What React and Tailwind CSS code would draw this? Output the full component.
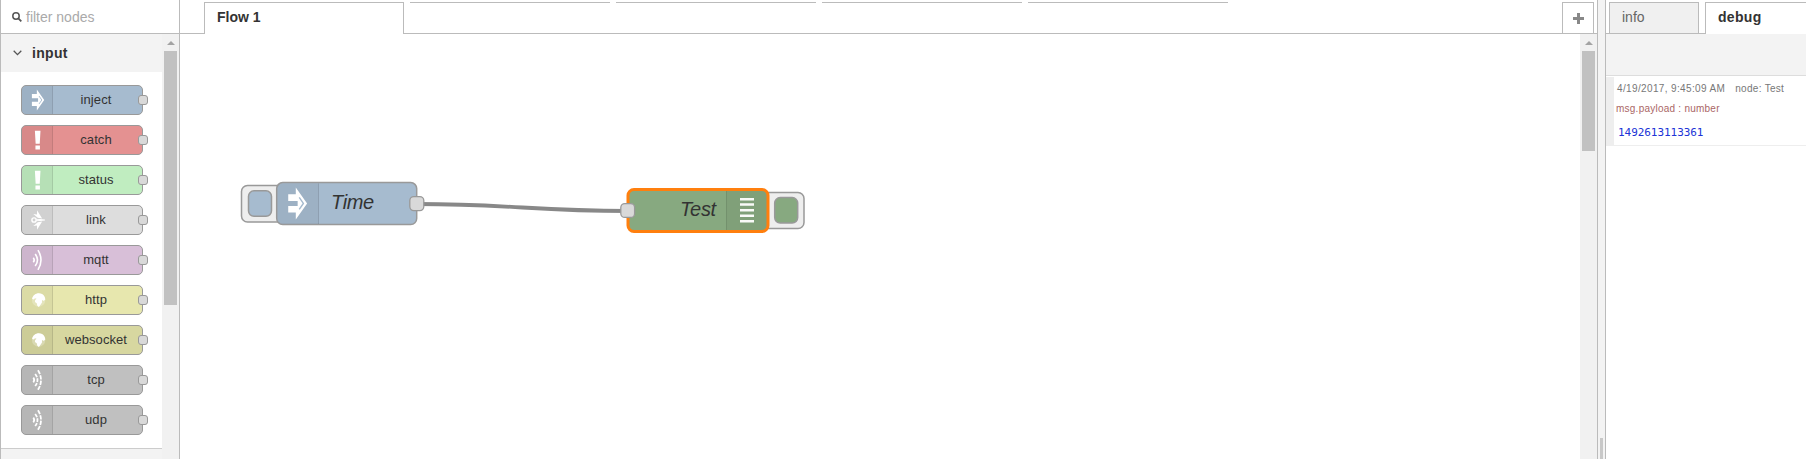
import React from 'react';

const palette = [
  { label: 'inject', bg: 'bg-[#a6bbcf]', icon: 'inject' },
  { label: 'catch', bg: 'bg-[#e49191]', icon: 'alert' },
  { label: 'status', bg: 'bg-[#c0edc0]', icon: 'alert' },
  { label: 'link', bg: 'bg-[#dddddd]', icon: 'link' },
  { label: 'mqtt', bg: 'bg-[#d8bfd8]', icon: 'waves' },
  { label: 'http', bg: 'bg-[#e7e7ae]', icon: 'globe' },
  { label: 'websocket', bg: 'bg-[#d7d7a0]', icon: 'globe' },
  { label: 'tcp', bg: 'bg-[#c0c0c0]', icon: 'bridge' },
  { label: 'udp', bg: 'bg-[#c0c0c0]', icon: 'bridge' },
];

function InjectGlyph() {
  return (
    <>
      <path fill="#fff" d="M4 8.600h5.300V3.800L17.200 15 9.300 26.200v-4.800H4v-4.600h6.600v-3.600H4z" />
      <path stroke="#a6bbcf" strokeWidth="1" d="M11.700 10.800l2.900 4.200-2.900 4.200" fill="none" />
    </>
  );
}

function NodeIcon({ name }) {
  return (
    <svg viewBox="0 0 20 30" className="h-[28px] w-[19px]" fill="none">
      {name === 'inject' && <InjectGlyph />}
      {name === 'alert' && (
        <path fill="#fff" d="M7.200 5h6l-.8 14H8zM7.800 21h4.800v4.200H7.800z" />
      )}
      {name === 'link' && (
        <>
          <path fill="#fff" d="M9.500 4.500l5.500 8.800-4.700-.8L5.500 8.500l4 .6z" />
          <path fill="#fff" d="M9.500 25.500l5.500-8.800-4.700.8-4.800 4 4-.6z" />
          <path fill="#fff" d="M9 14.200l4-.4 5 .6v1.200l-5 .6-4-.4z" />
          <circle cx="6.300" cy="15" r="2.300" stroke="#fff" strokeWidth="1.500" />
        </>
      )}
      {name === 'waves' && (
        <g stroke="#fff" strokeWidth="1.700">
          <path d="M5.500 12.500q2 2.500 0 5" />
          <path d="M7.500 8.500q5 6.500 0 13" />
          <path d="M10.500 4.500q6.500 10.500 0 21" />
        </g>
      )}
      {name === 'globe' && (
        <>
          <circle cx="11.200" cy="15" r="7.200" fill="#fff" fillOpacity=".25" />
          <path fill="#fff" d="M4.200 13.800C5 10 8.300 7.700 11.500 7.800c4 .1 6.600 3 6.900 6.700l-1.800 1.700-1-1.200-.9.700.3 1.600-1.400 2.200-2.100 3-1.700-1.400-.6-2.700-2-1.300.3-2.200 1.500-1.200-1.800-.5-1 1.300z" />
        </>
      )}
      {name === 'bridge' && (
        <g stroke="#fff" strokeWidth="1.900">
          <path d="M5.500 12.500q2 2.500 0 5" />
          <path d="M7.500 8.500q5 6.500 0 13" strokeDasharray="4 1.200" />
          <path d="M10.500 4.500q6.500 10.500 0 21" strokeDasharray="4.600 1.300" />
        </g>
      )}
    </svg>
  );
}

function PaletteNode({ label, bg, icon }) {
  return (
    <div className={`relative flex h-[30px] w-[122px] rounded-[5px] border border-[#999] ${bg}`}>
      <div className="flex w-[31px] shrink-0 items-center justify-center rounded-l-[4px] border-r border-black/10 bg-black/5">
        <NodeIcon name={icon} />
      </div>
      <div className="flex-1 pr-[3px] text-center text-[13px] leading-[27px] tracking-[0.08px] text-[#333]">
        {label}
      </div>
      <span className="absolute top-[9px] -right-[6px] h-[10px] w-[10px] rounded-[3px] border border-[#999] bg-[#d9d9d9]" />
    </div>
  );
}

function ScrollBar({ thumb }) {
  return (
    <div className="flex w-[17px] shrink-0 flex-col items-center bg-[#f1f1f1]">
      <div className="flex h-[17px] shrink-0 items-center justify-center">
        <svg viewBox="0 0 8 4" className="mt-px h-[4px] w-[8px]">
          <path d="M0 4L4 0l4 4z" fill="#a3a3a3" />
        </svg>
      </div>
      <div className={`w-[13px] shrink-0 bg-[#c1c1c1] ${thumb}`} />
    </div>
  );
}

function Palette() {
  return (
    <aside className="flex w-[180px] shrink-0 flex-col border-x border-[#bbb] bg-white">
      <div className="flex h-[34px] shrink-0 items-center border-b border-[#bbb] pl-[11px]">
        <svg viewBox="0 0 10 10" className="h-[10px] w-[10px]" fill="none" stroke="#555">
          <circle cx="4" cy="4" r="3.200" strokeWidth="1.500" />
          <path d="M6.300 6.300L9.300 9.300" strokeWidth="1.800" />
        </svg>
        <span className="ml-[4px] text-[14px] leading-5 text-[#aaa]">filter nodes</span>
      </div>
      <div className="flex min-h-0 flex-1">
        <div className="flex min-w-0 flex-1 flex-col">
          <div className="flex h-[38px] shrink-0 items-center bg-[#f3f3f3] pl-[12px]">
            <svg viewBox="0 0 9 6" className="h-[6px] w-[9px]" fill="none" stroke="#555" strokeWidth="1.300">
              <path d="M.7.800l3.800 3.800L8.300.8" />
            </svg>
            <span className="ml-[10px] text-[14px] font-bold tracking-[0.3px] text-[#333]">input</span>
          </div>
          <div className="flex h-[376px] shrink-0 flex-col gap-[10px] pt-[13px] pl-[20px]">
            {palette.map((n) => (
              <PaletteNode key={n.label} {...n} />
            ))}
          </div>
          <div className="flex-1 border-t border-[#ccc] bg-[#f3f3f3]" />
        </div>
        <ScrollBar thumb="h-[254px]" />
      </div>
    </aside>
  );
}

function FlowCanvas() {
  return (
    <svg className="block h-[425px] w-[1400px]" viewBox="180 34 1400 425" fill="none">
      <path d="M417 204C510 204 535 211 628 211" stroke="#888" strokeWidth="3.800" />

      <g stroke="#999" strokeWidth="1.500">
        <rect x="241.500" y="185.500" width="45" height="36.500" rx="6" fill="#eee" />
        <rect x="248.500" y="190.800" width="23" height="25.500" rx="5.500" fill="#a6bbcf" />
        <rect x="276.700" y="182.600" width="140" height="42" rx="6" fill="#a6bbcf" />
      </g>
      <path d="M283 183.500h35.500v40.500H283q-5.500 0-5.500-5.500v-29.500q0-5.500 5.500-5.500z" fill="#000" fillOpacity=".05" />
      <path d="M318.500 183.500v40.500" stroke="#000" strokeOpacity=".12" />
      <g transform="translate(282.500 182) scale(1.430)">
        <InjectGlyph />
      </g>
      <text x="331" y="209" className="fill-[#333] text-[20px] tracking-[-0.4px] italic">Time</text>
      <rect x="409.800" y="196.600" width="14" height="14" rx="4" fill="#d9d9d9" stroke="#999" strokeWidth="1.300" />

      <g stroke="#999" strokeWidth="1.500">
        <rect x="759" y="192.500" width="45" height="36" rx="6" fill="#eee" />
        <rect x="774.700" y="197.600" width="23" height="25.500" rx="5.500" fill="#87a980" />
      </g>
      <rect x="628" y="189.500" width="140" height="42" rx="6" fill="#87a980" />
      <path d="M726.500 190.500h36q5 0 5 5v30q0 5-5 5h-36z" fill="#000" fillOpacity=".05" />
      <path d="M726.500 190.500v40" stroke="#000" strokeOpacity=".12" />
      <rect x="628" y="189.500" width="140" height="42" rx="6" stroke="#ff7f0e" strokeWidth="3" />
      <path d="M740 199.200h14M740 204.600h14M740 210.200h14M740 215.700h14M740 221.200h14" stroke="#fff" strokeOpacity=".95" strokeWidth="2.500" />
      <text x="680" y="216" className="fill-[#333] text-[20px] tracking-[-0.3px] italic">Test</text>
      <rect x="620.800" y="203.600" width="13.800" height="13.800" rx="4" fill="#d9d9d9" stroke="#999" strokeWidth="1.300" />
    </svg>
  );
}

function Workspace() {
  return (
    <main className="flex min-w-0 flex-1 flex-col border-r border-[#bbb] bg-white">
      <div className="flex h-[34px] shrink-0 pt-[2px]">
        <div className="w-[24px] border-b border-[#bbb]" />
        <div className="w-[200px] border-x border-t border-[#bbb] pl-[12px] text-[14px] leading-[29px] font-bold text-[#333]">
          Flow 1
        </div>
        <div className="flex flex-1 gap-[6px] border-b border-[#bbb] pl-[6px]">
          <div className="w-[200px] border-t border-[#bbb]" />
          <div className="w-[200px] border-t border-[#bbb]" />
          <div className="w-[200px] border-t border-[#bbb]" />
          <div className="w-[200px] border-t border-[#bbb]" />
        </div>
        <div className="flex w-[32px] items-center justify-center border border-[#bbb]">
          <svg viewBox="0 0 11 11" className="h-[11px] w-[11px]">
            <path d="M4 0h3v4h4v3H7v4H4V7H0V4h4z" fill="#888" />
          </svg>
        </div>
        <div className="w-[3px] border-b border-[#bbb]" />
      </div>
      <div className="flex min-h-0 flex-1">
        <div className="min-w-0 flex-1 overflow-hidden">
          <FlowCanvas />
        </div>
        <ScrollBar thumb="h-[100px]" />
      </div>
    </main>
  );
}

function DebugSidebar() {
  return (
    <aside className="flex w-[201px] shrink-0 flex-col border-l border-[#bbb] bg-white">
      <div className="flex h-[34px] shrink-0 pt-[2px]">
        <div className="w-[3px] border-b border-[#bbb]" />
        <div className="w-[90px] border border-[#bbb] bg-[#f0f0f0] pl-[12px] text-[14px] leading-[29px] text-[#666]">
          info
        </div>
        <div className="w-[6px] border-b border-[#bbb]" />
        <div className="flex-1 border-t border-l border-[#bbb] pl-[12px] text-[14px] leading-[29px] font-bold tracking-[0.3px] text-[#333]">
          debug
        </div>
      </div>
      <div className="h-[42px] shrink-0 border-b border-[#ddd] bg-[#f3f3f3]" />
      <div className="mt-px flex h-[69px] flex-col border-b border-l-8 border-[#eee] pl-[3px] whitespace-nowrap">
        <div className="flex gap-[10px] pt-[5px] text-[10px] leading-[14px] text-[#777]">
          <span className="tracking-[0.36px]">4/19/2017, 9:45:09 AM</span>
          <span className="tracking-[0.3px]">node: Test</span>
        </div>
        <div className="-ml-px pt-[6px] text-[10px] leading-[14px] tracking-[0.24px] text-[#a66]">
          msg.payload : number
        </div>
        <div className="pt-[9px] pl-px font-['DejaVu_Sans_Mono',monospace] text-[11px] leading-[16px] tracking-[-0.05px] text-[#2033d6]">
          1492613113361
        </div>
      </div>
    </aside>
  );
}

export default function App() {
  return (
    <div className="flex h-[459px] w-[1806px] overflow-hidden bg-white font-['Liberation_Sans',Arial,sans-serif]">
      <Palette />
      <Workspace />
      <div className="flex w-[7px] shrink-0 items-end justify-center bg-[#f3f3f3]">
        <div className="h-[21px] w-[3px] bg-[#c8c8c8]" />
      </div>
      <DebugSidebar />
    </div>
  );
}
